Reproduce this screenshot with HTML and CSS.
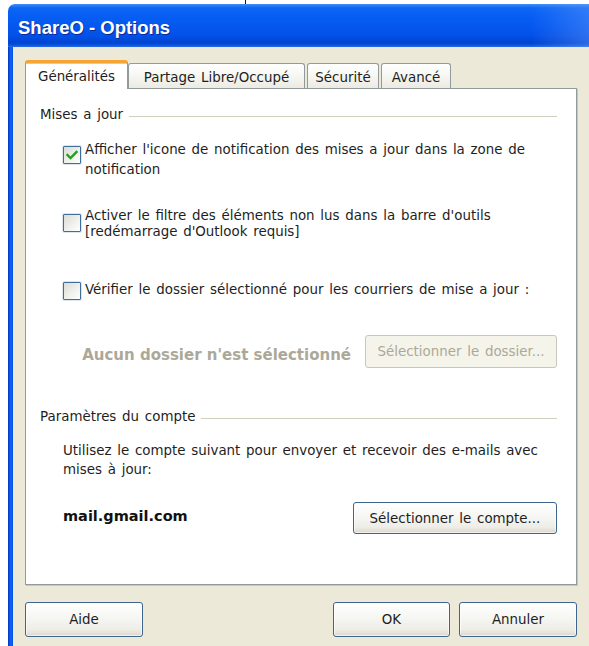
FILE: index.html
```html
<!DOCTYPE html>
<html lang="fr">
<head>
<meta charset="utf-8">
<title>ShareO - Options</title>
<link rel="stylesheet" href="styles.css">
</head>
<body>
<span class="caret"></span>
<div class="window">
  <div class="titlebar"><span class="title">ShareO - Options</span></div>
  <div class="frame">
    <div class="frame-edge"></div>
    <div class="client">
      <div class="tabs">
        <div class="tab active">Généralités</div>
        <div class="tab tab-partage">Partage Libre/Occupé</div>
        <div class="tab tab-securite">Sécurité</div>
        <div class="tab tab-avance">Avancé</div>
      </div>
      <div class="pane">
        <div class="group-head head-updates"><span>Mises a jour</span><i class="rule"></i></div>

        <label class="option opt-notify">
          <span class="check checked"><svg viewBox="0 0 18 18" width="18" height="18"><path d="M4.5 9 L7.5 12 L13.5 6" fill="none" stroke="#21a121" stroke-width="2.4" stroke-linecap="square"/></svg></span>
          <span class="option-text">Afficher l'icone de notification des mises a jour dans la zone de<br>notification</span>
        </label>

        <label class="option opt-filter">
          <span class="check"></span>
          <span class="option-text">Activer le filtre des éléments non lus dans la barre d'outils<br>[redémarrage d'Outlook requis]</span>
        </label>

        <label class="option opt-folder">
          <span class="check"></span>
          <span class="option-text">Vérifier le dossier sélectionné pour les courriers de mise a jour :</span>
        </label>

        <div class="folder-row">
          <span class="folder-none">Aucun dossier n'est sélectionné</span>
          <button class="btn btn-disabled btn-folder" disabled>Sélectionner le dossier...</button>
        </div>

        <div class="group-head head-account"><span>Paramètres du compte</span><i class="rule"></i></div>

        <p class="account-info">Utilisez le compte suivant pour envoyer et recevoir des e-mails avec<br>mises à jour:</p>

        <div class="account-row">
          <span class="account-name">mail.gmail.com</span>
          <button class="btn btn-account">Sélectionner le compte...</button>
        </div>
      </div>

      <div class="actions">
        <button class="btn btn-dialog">Aide</button>
        <span class="spacer"></span>
        <button class="btn btn-dialog btn-ok">OK</button>
        <button class="btn btn-dialog">Annuler</button>
      </div>
    </div>
  </div>
</div>
</body>
</html>
```
FILE: styles.css
```css
html, body {
  margin: 0;
  overflow: hidden;
  background: #fff;
}

body {
  font-family: "DejaVu Sans", "Liberation Sans", sans-serif;
  font-size: 13.4px;
  word-spacing: 1.5px;
  color: #1e1e1e;
}

.caret {
  position: absolute;
  left: 245px;
  top: 0;
  width: 1px;
  height: 4px;
  background: #111;
}

/* Window chrome */
.window {
  margin: 4px 0 0 8px;
  width: 581px;
  height: 642px;
  display: flex;
  flex-direction: column;
}

.titlebar {
  height: 43px;
  box-sizing: border-box;
  border-radius: 7px 0 0 0;
  background:
    linear-gradient(to right, rgba(255,255,255,0) 90%, rgba(120,170,255,0.35) 100%),
    linear-gradient(to bottom, #3c8ef6 0%, #0f66f2 9%, #0860f4 22%, #0558ef 50%, #0350e6 75%, #0044d2 90%, #0a4fd8 95%, #2a6ee6 100%);
  display: flex;
  align-items: center;
  padding: 5px 0 0 10px;
}

.title {
  font-family: "Liberation Sans", sans-serif;
  font-weight: bold;
  font-size: 18.5px;
  word-spacing: 0;
  color: #fff;
  text-shadow: 1px 1px 0 #0a2a9a;
}

.frame {
  flex: 1;
  display: flex;
}

.frame-edge {
  width: 5px;
  background: linear-gradient(to right, #0035c0, #0a58ec 40%, #1565f2 60%, #0650e0);
}

.client {
  flex: 1;
  background: #ece9d8;
  padding: 13px 12px 0 12px;
  display: flex;
  flex-direction: column;
}

/* Tabs */
.tabs {
  display: flex;
  align-items: flex-end;
  height: 28px;
  position: relative;
  z-index: 1;
}

.tab {
  box-sizing: border-box;
  height: 25px;
  padding-top: 2px;
  border: 1px solid #919b9c;
  border-bottom: none;
  border-radius: 3px 3px 0 0;
  background: linear-gradient(#ffffff, #f6f6f2 50%, #eceae2);
  display: flex;
  align-items: center;
  justify-content: center;
  white-space: nowrap;
}

.tab.active {
  width: 103px;
  height: 29px;
  margin-bottom: -1px;
  padding-top: 1px;
  background: #fff;
  border-top: 3px solid #f4a534;
  box-shadow: inset 0 1px 0 #ffc850;
}

.tab-partage { width: 177px; margin-left: 0; }
.tab-securite { width: 72px; margin-left: 2px; }
.tab-avance { width: 70px; margin-left: 2px; }

/* Tab page */
.pane {
  height: 497px;
  box-sizing: border-box;
  border: 1px solid #919b9c;
  background: #fff;
  box-shadow: 1px 1px 0 #c9c6b6;
  padding: 0 19px 0 14px;
  display: flex;
  flex-direction: column;
}

.group-head {
  display: flex;
  align-items: center;
  height: 18px;
  white-space: nowrap;
}

.head-updates { margin-top: 16px; }
.head-account { margin-top: 39px; }

.rule {
  flex: 1;
  border-top: 1px solid #d0d0bf;
  margin: 4px 0 0 6px;
}

.option {
  display: flex;
  align-items: flex-start;
  gap: 4px;
  margin-left: 23px;
}

.check {
  flex: none;
  box-sizing: border-box;
  width: 18px;
  height: 18px;
  border: 1px solid #3f6d9c;
  border-radius: 1px;
  background: linear-gradient(135deg, #dcdcd5 0%, #f0f0ec 55%, #ffffff 100%);
  box-shadow: 0 0 0 1px rgba(120,150,190,0.25);
}

.check svg { display: block; margin: -1px 0 0 -1px; }

.opt-notify { margin-top: 17px; line-height: 20px; }
.opt-notify .check { margin-top: 6px; }

.opt-filter { margin-top: 28px; line-height: 16px; }
.opt-filter .check { margin-top: 6px; }

.opt-folder { margin-top: 41px; line-height: 18px; }
.opt-folder .check { margin-top: 1px; }

.folder-row {
  margin-top: 35px;
  display: flex;
  align-items: center;
  justify-content: flex-end;
  gap: 14px;
}

.folder-none {
  margin-top: 7px;
  font-weight: bold;
  font-size: 15px;
  word-spacing: 0;
  color: #aca899;
  white-space: nowrap;
}

.account-info {
  margin: 16px 0 0 23px;
  line-height: 19px;
}

.account-row {
  margin-top: 23px;
  display: flex;
  align-items: center;
  justify-content: space-between;
  padding-left: 23px;
}

.account-name {
  margin-bottom: 5px;
  font-weight: bold;
  font-size: 14.5px;
  color: #111;
}

/* Push buttons */
.btn {
  box-sizing: border-box;
  font-family: inherit;
  font-size: 13.4px;
  word-spacing: 1.5px;
  color: #1e1e1e;
  border: 1px solid #3d6590;
  border-radius: 3px;
  background: linear-gradient(#ffffff, #f6f6f3 45%, #eeede7 80%, #dcd8cc);
  box-shadow: inset 0 0 0 1px rgba(255,255,255,0.6);
  padding: 0;
  white-space: nowrap;
}

.btn-folder { width: 192px; height: 33px; }
.btn-account { width: 204px; height: 32px; }

.btn-disabled {
  border-color: #c9c7ba;
  background: #f5f4ea;
  color: #aca899;
  box-shadow: none;
}

.actions {
  margin-top: 17px;
  display: flex;
  gap: 9px;
}

.spacer { flex: 1; }

.btn-dialog { width: 118px; height: 35px; }
.btn-ok { width: 117px; }
```
